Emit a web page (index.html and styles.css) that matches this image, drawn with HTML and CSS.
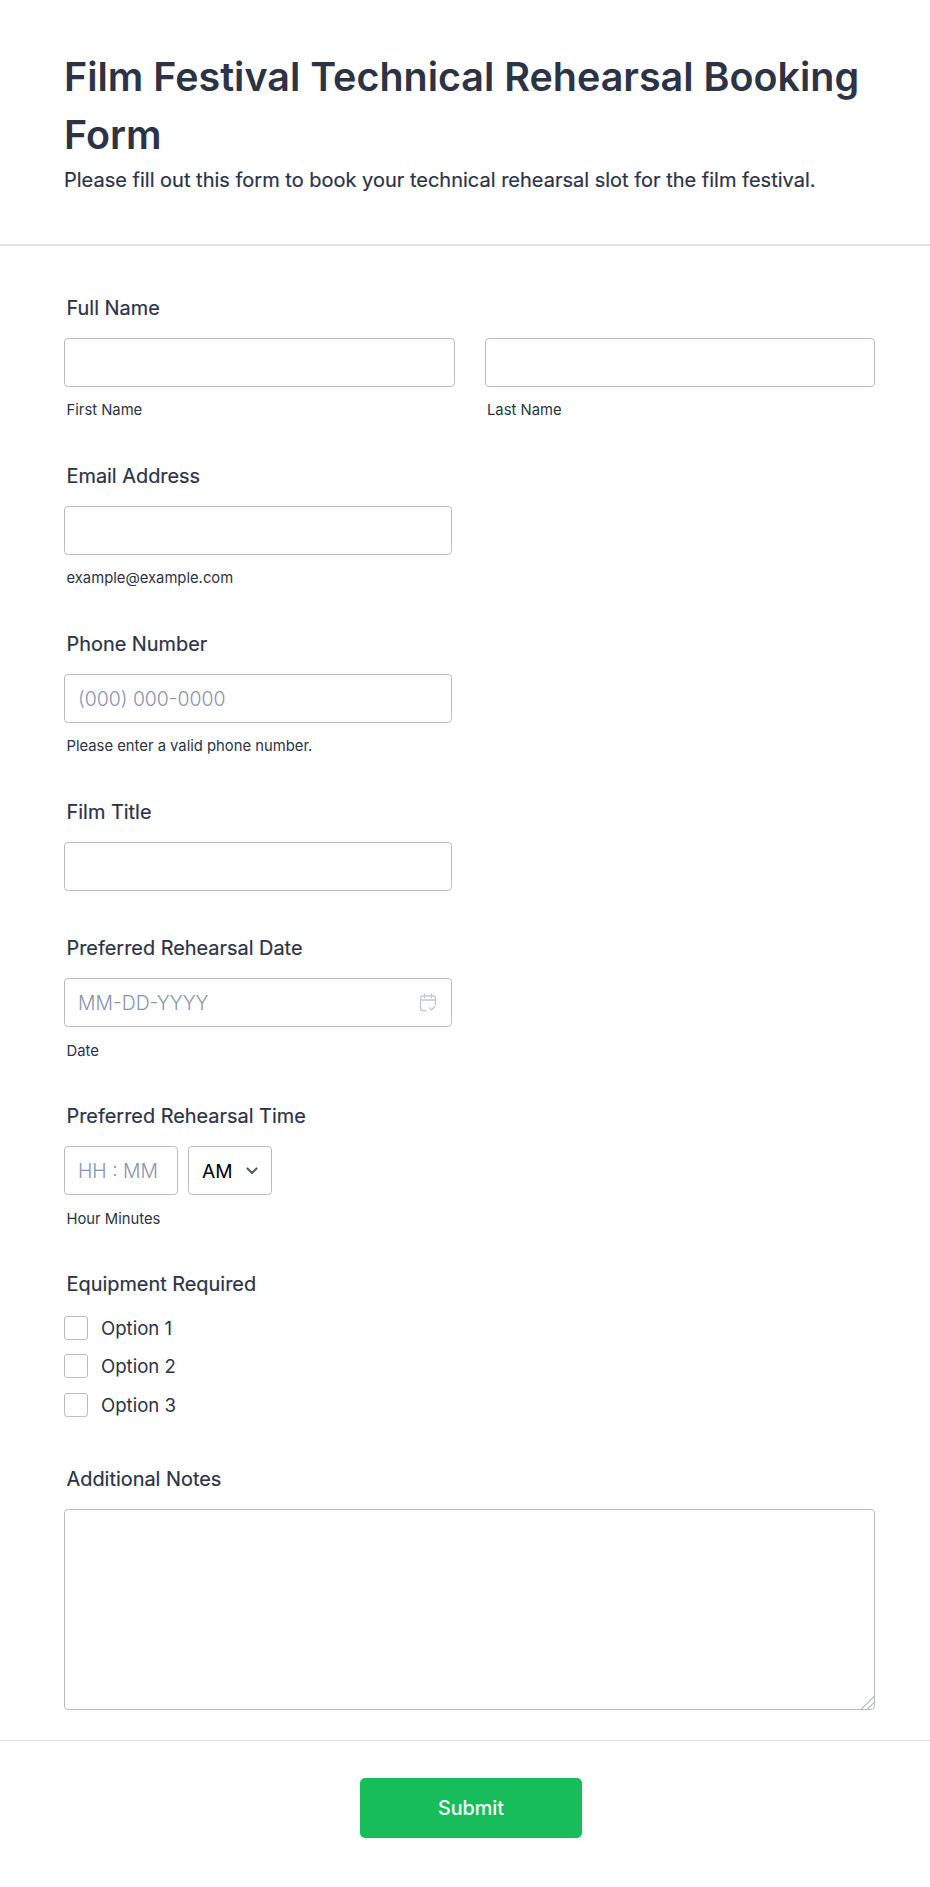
FILE: index.html
```html
<!DOCTYPE html>
<html lang="en">
<head>
  <meta charset="UTF-8" />
  <meta name="viewport" content="width=device-width, initial-scale=1.0"/>
  <title>Film Festival Technical Rehearsal Booking Form</title>
  <link rel="stylesheet" href="styles.css">
</head>
<body>
  <form class="form" autocomplete="off">
    <header class="form-header">
      <h1>Film Festival Technical Rehearsal Booking Form</h1>
      <p>Please fill out this form to book your technical rehearsal slot for the film festival.</p>
    </header>

    <div class="fields">
      <div class="field">
        <label class="field-label">Full Name</label>
        <div class="name-row">
          <div class="name-col">
            <input type="text" class="input" />
            <span class="sublabel">First Name</span>
          </div>
          <div class="name-col">
            <input type="text" class="input" />
            <span class="sublabel">Last Name</span>
          </div>
        </div>
      </div>

      <div class="field">
        <label class="field-label">Email Address</label>
        <input type="email" class="input input-short" />
        <span class="sublabel">example@example.com</span>
      </div>

      <div class="field">
        <label class="field-label">Phone Number</label>
        <input type="tel" class="input input-short" placeholder="(000) 000-0000" />
        <span class="sublabel">Please enter a valid phone number.</span>
      </div>

      <div class="field">
        <label class="field-label">Film Title</label>
        <input type="text" class="input input-short" />
      </div>

      <div class="field">
        <label class="field-label">Preferred Rehearsal Date</label>
        <div class="date-wrap">
          <input type="text" class="input input-short" placeholder="MM-DD-YYYY" />
          <svg class="date-icon" width="18" height="19" viewBox="0 0 18 19" fill="none" stroke="#c3c8d4" stroke-width="1.4" stroke-linecap="round" stroke-linejoin="round">
            <path d="M7 17.5H3.5a2 2 0 0 1-2-2V5a2 2 0 0 1 2-2h11a2 2 0 0 1 2 2v6.5"/>
            <path d="M1.5 7h15"/>
            <path d="M5.5 1v3.5M12.5 1v3.5"/>
            <path d="M10.5 15l2 2 3.5-3.5"/>
          </svg>
        </div>
        <span class="sublabel sublabel-low">Date</span>
      </div>

      <div class="field">
        <label class="field-label">Preferred Rehearsal Time</label>
        <div class="time-row">
          <input type="text" class="input input-time" placeholder="HH : MM" />
          <div class="ampm">
            <span>AM</span>
            <svg width="12" height="8" viewBox="0 0 12 8" fill="none" stroke="#565f73" stroke-width="2.2" stroke-linecap="round" stroke-linejoin="round">
              <path d="M1.5 1.5L6 6l4.5-4.5"/>
            </svg>
          </div>
        </div>
        <span class="sublabel sublabel-low">Hour Minutes</span>
      </div>

      <div class="field">
        <label class="field-label">Equipment Required</label>
        <div class="options">
          <label class="option"><input type="checkbox" /><span>Option 1</span></label>
          <label class="option"><input type="checkbox" /><span>Option 2</span></label>
          <label class="option"><input type="checkbox" /><span>Option 3</span></label>
        </div>
      </div>

      <div class="field">
        <label class="field-label">Additional Notes</label>
        <textarea class="input notes"></textarea>
      </div>
    </div>

    <footer class="form-footer">
      <button type="submit">Submit</button>
    </footer>
  </form>
</body>
</html>
```

FILE: styles.css
```css
:root {
  --text: #2c3345;
  --border: #b8bdc9;
  --line: #dfe1ea;
  --placeholder: #8894ab;
  --green: #18bd5b;
}
body {
  margin: 0;
  background: #fff;
  color: var(--text);
  font-family: Inter, "Liberation Sans", sans-serif;
}
.form-header {
  padding: 48px 40px 50px 64px;
  border-bottom: 2px solid var(--line);
}
h1 {
  margin: 0;
  font-size: 39.45px;
  line-height: 58px;
  font-weight: 600;
}
.form-header p {
  margin: 2px 0 0;
  font-size: 20px;
  line-height: 28px;
  font-weight: 400;
  -webkit-text-stroke: 0.2px var(--text);
}
.fields {
  padding: 50px 55px 30px 64px;
  display: flex;
  flex-direction: column;
}
.field {
  display: flex;
  flex-direction: column;
  margin-bottom: 45px;
}
.field:last-child {
  margin-bottom: 0;
}
.field-label {
  display: block;
  margin: 0 0 18px 2.5px;
  font-size: 19.9px;
  line-height: 24px;
  font-weight: 400;
  -webkit-text-stroke: 0.2px var(--text);
}
.input {
  display: block;
  box-sizing: border-box;
  width: 100%;
  height: 49px;
  padding: 0 13px;
  border: 1px solid var(--border);
  border-radius: 4px;
  background: #fff;
  color: var(--text);
  font-family: inherit;
  font-size: 19.4px;
  font-weight: 300;
  outline: none;
}
.input::placeholder {
  color: var(--placeholder);
  opacity: 1;
}
.input-short {
  width: 388px;
}
.sublabel {
  display: block;
  margin: 14px 0 0 2.5px;
  font-size: 14.8px;
  line-height: 18px;
}
.sublabel-low {
  margin-top: 15px;
  margin-bottom: -1px;
}
.name-row {
  display: flex;
  gap: 30px;
}
.name-col {
  flex: 1;
}
.date-wrap {
  position: relative;
  width: 388px;
}
.date-icon {
  position: absolute;
  top: 15px;
  right: 15px;
}
.time-row {
  display: flex;
  gap: 10px;
}
.input-time {
  width: 114px;
}
.ampm {
  box-sizing: border-box;
  width: 84px;
  height: 49px;
  padding: 0 13px;
  display: flex;
  align-items: center;
  justify-content: space-between;
  border: 1px solid var(--border);
  border-radius: 4px;
  color: #000;
  font-size: 19.2px;
}
.options {
  display: flex;
  flex-direction: column;
  gap: 14.4px;
  margin-top: 2px;
  padding-bottom: 5px;
}
.option {
  display: flex;
  align-items: center;
  gap: 13px;
  font-size: 18.6px;
  line-height: 24px;
  font-weight: 400;
}
.option input {
  appearance: none;
  box-sizing: border-box;
  width: 24px;
  height: 24px;
  margin: 0;
  border: 1px solid var(--border);
  border-radius: 3px;
  background: #fff;
}
.notes {
  height: 201px;
  resize: vertical;
}
.notes::-webkit-resizer {
  background: linear-gradient(135deg, transparent 55%, #c3c8d4 55%, #c3c8d4 62%, transparent 62%, transparent 75%, #c3c8d4 75%, #c3c8d4 82%, transparent 82%);
}
.form-footer {
  padding: 37px 0 49px 12px;
  border-top: 1px solid var(--line);
  display: flex;
  justify-content: center;
}
button {
  width: 222px;
  height: 60px;
  border: none;
  border-radius: 5px;
  background: var(--green);
  color: #fff;
  font-family: inherit;
  font-size: 19.8px;
  font-weight: 500;
  cursor: pointer;
}
```
